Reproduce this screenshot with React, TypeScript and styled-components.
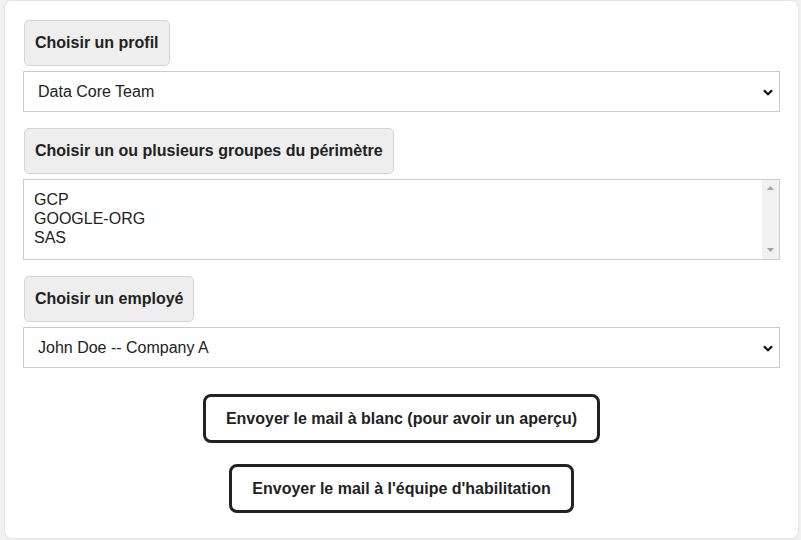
import React from 'react';
import styled, { createGlobalStyle } from 'styled-components';

const GlobalStyle = createGlobalStyle`
  html, body {
    margin: 0;
    padding: 0;
    background: #f1f1f1;
    font-family: 'Liberation Sans', Arial, sans-serif;
    color: #222;
  }
`;

/* champ de sélection simple ------------- */
const Chevron = () => (
  <svg width="10" height="7" viewBox="0 0 10 7">
    <path d="M1 1.2 L5 5.2 L9 1.2" fill="none" stroke="#111" strokeWidth="2.2" />
  </svg>
);

const SelectBox: React.FC<{ value: string }> = ({ value }) => (
  <SelectWrapper>
    <SelectValue>{value}</SelectValue>
    <ChevronWrapper>
      <Chevron />
    </ChevronWrapper>
  </SelectWrapper>
);

const SelectWrapper = styled.div`
  height: 41px;
  box-sizing: border-box;
  border: 1px solid #cccccc;
  background: #fff;
  display: flex;
  align-items: center;
  padding: 0 6px 0 14px;
  font-size: 16px;
`;
const SelectValue = styled.span`
  flex: 1;
`;
const ChevronWrapper = styled.span`
  display: flex;
  align-items: center;
  padding-top: 1px;
`;
/* ------------- */

/* liste multiple ------------- */
const ListBox: React.FC<{ items: string[] }> = ({ items }) => (
  <ListWrapper>
    <ListItems>
      {items.map((item) => (
        <ListItem key={item}>{item}</ListItem>
      ))}
    </ListItems>
    <ScrollTrack>
      <svg width="7" height="4" viewBox="0 0 7 4">
        <path d="M0 4 L3.5 0 L7 4 Z" fill="#a3a3a3" />
      </svg>
      <svg width="7" height="4" viewBox="0 0 7 4">
        <path d="M0 0 L3.5 4 L7 0 Z" fill="#a3a3a3" />
      </svg>
    </ScrollTrack>
  </ListWrapper>
);

const ListWrapper = styled.div`
  height: 81px;
  box-sizing: border-box;
  border: 1px solid #cccccc;
  background: #fff;
  display: flex;
`;
const ListItems = styled.div`
  flex: 1;
  padding: 10px 10px;
  font-size: 16px;
`;
const ListItem = styled.div`
  line-height: 19px;
`;
const ScrollTrack = styled.div`
  width: 17px;
  background: #f1f1f1;
  display: flex;
  flex-direction: column;
  align-items: center;
  justify-content: space-between;
  padding: 6px 0 7px;
`;
/* ------------- */

const App: React.FC = () => (
  <>
    <GlobalStyle />
    <Card>
      <Section>
        <FieldLabel>Choisir un profil</FieldLabel>
        <SelectBox value="Data Core Team" />
      </Section>
      <Section>
        <FieldLabel>Choisir un ou plusieurs groupes du périmètre</FieldLabel>
        <ListBox items={['GCP', 'GOOGLE-ORG', 'SAS']} />
      </Section>
      <Section>
        <FieldLabel>Choisir un employé</FieldLabel>
        <SelectBox value="John Doe -- Company A" />
      </Section>
      <Actions>
        <ActionButton>Envoyer le mail à blanc (pour avoir un aperçu)</ActionButton>
        <ActionButton>Envoyer le mail à l'équipe d'habilitation</ActionButton>
      </Actions>
    </Card>
  </>
);

const Card = styled.div`
  margin-left: 4px;
  width: 795px;
  height: 539px;
  box-sizing: border-box;
  background: #fff;
  border: 1px solid #e4e4e4;
  border-radius: 8px;
  padding: 19px 18px 0 18px;
  display: flex;
  flex-direction: column;
  gap: 16px;
`;
const Section = styled.div`
  display: flex;
  flex-direction: column;
  align-items: stretch;
  gap: 5px;
`;
const FieldLabel = styled.div`
  align-self: flex-start;
  margin-left: 1px;
  height: 46px;
  box-sizing: border-box;
  display: flex;
  align-items: center;
  padding: 0 10px;
  background: #eeeeee;
  border: 1px solid #d4d4d4;
  border-radius: 5px;
  font-size: 16px;
  font-weight: bold;
  color: #222;
`;
const Actions = styled.div`
  display: flex;
  flex-direction: column;
  align-items: center;
  gap: 21px;
  margin-top: 10px;
`;
const ActionButton = styled.button`
  height: 49px;
  padding: 0 20px;
  background: #fff;
  border: 3px solid #222;
  border-radius: 8px;
  font-family: 'Liberation Sans', Arial, sans-serif;
  font-size: 16px;
  font-weight: bold;
  color: #222;
  cursor: pointer;
`;

export default App;
